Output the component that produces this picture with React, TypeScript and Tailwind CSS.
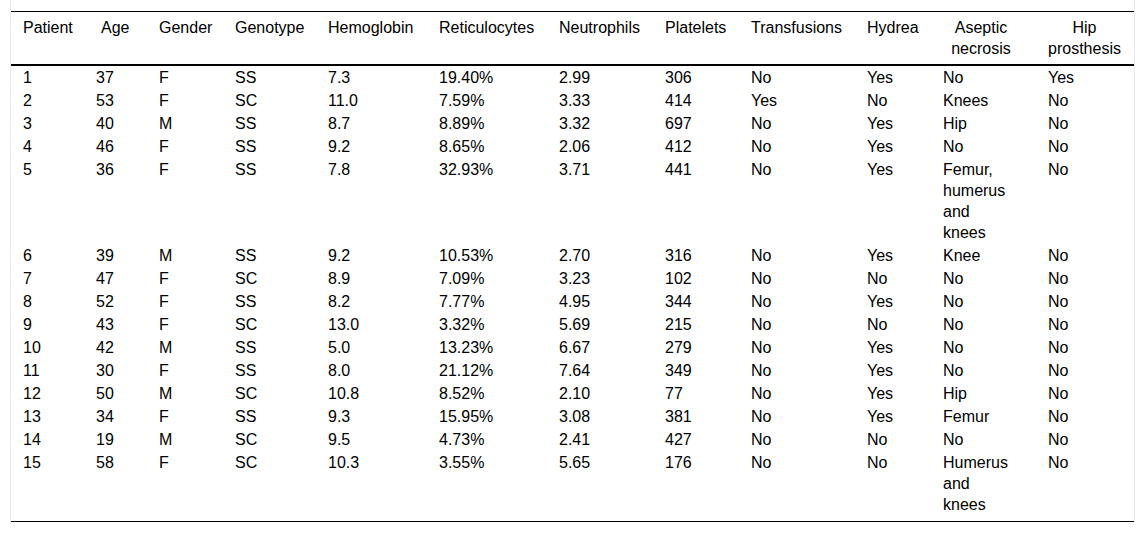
import React from 'react';

type Row = string[];

const rows: Row[] = [
  ['1', '37', 'F', 'SS', '7.3', '19.40%', '2.99', '306', 'No', 'Yes', 'No', 'Yes'],
  ['2', '53', 'F', 'SC', '11.0', '7.59%', '3.33', '414', 'Yes', 'No', 'Knees', 'No'],
  ['3', '40', 'M', 'SS', '8.7', '8.89%', '3.32', '697', 'No', 'Yes', 'Hip', 'No'],
  ['4', '46', 'F', 'SS', '9.2', '8.65%', '2.06', '412', 'No', 'Yes', 'No', 'No'],
  ['5', '36', 'F', 'SS', '7.8', '32.93%', '3.71', '441', 'No', 'Yes', 'Femur, humerus and knees', 'No'],
  ['6', '39', 'M', 'SS', '9.2', '10.53%', '2.70', '316', 'No', 'Yes', 'Knee', 'No'],
  ['7', '47', 'F', 'SC', '8.9', '7.09%', '3.23', '102', 'No', 'No', 'No', 'No'],
  ['8', '52', 'F', 'SS', '8.2', '7.77%', '4.95', '344', 'No', 'Yes', 'No', 'No'],
  ['9', '43', 'F', 'SC', '13.0', '3.32%', '5.69', '215', 'No', 'No', 'No', 'No'],
  ['10', '42', 'M', 'SS', '5.0', '13.23%', '6.67', '279', 'No', 'Yes', 'No', 'No'],
  ['11', '30', 'F', 'SS', '8.0', '21.12%', '7.64', '349', 'No', 'Yes', 'No', 'No'],
  ['12', '50', 'M', 'SC', '10.8', '8.52%', '2.10', '77', 'No', 'Yes', 'Hip', 'No'],
  ['13', '34', 'F', 'SS', '9.3', '15.95%', '3.08', '381', 'No', 'Yes', 'Femur', 'No'],
  ['14', '19', 'M', 'SC', '9.5', '4.73%', '2.41', '427', 'No', 'No', 'No', 'No'],
  ['15', '58', 'F', 'SC', '10.3', '3.55%', '5.65', '176', 'No', 'No', 'Humerus and knees', 'No'],
];

// column widths measured from the picture
const widths = [85, 63, 76, 93, 111, 120, 106, 86, 116, 76, 105, 86];

export default function App() {
  return (
    <div className="bg-white min-h-[533px] text-black text-[16px] leading-[21px]" style={{ fontFamily: '"Liberation Sans", Arial, sans-serif' }}>
      <div className="ml-[10px] w-[1125px] border-x border-[#ebebeb] pt-[11px]">
        <table className="table-fixed border-collapse w-[1123px]">
          <colgroup>
            {widths.map((w, i) => <col key={i} style={{ width: w }} />)}
          </colgroup>
          <thead>
            <tr className="border-t border-black border-b-2 align-top">
              <th className="font-normal text-left pl-3 py-[5px]">Patient</th>
              <th className="font-normal text-left pl-[5px] py-[5px]">Age</th>
              <th className="font-normal text-left py-[5px]">Gender</th>
              <th className="font-normal text-left py-[5px]">Genotype</th>
              <th className="font-normal text-left py-[5px]">Hemoglobin</th>
              <th className="font-normal text-left py-[5px]">Reticulocytes</th>
              <th className="font-normal text-left py-[5px]">Neutrophils</th>
              <th className="font-normal text-left py-[5px]">Platelets</th>
              <th className="font-normal text-left py-[5px]">Transfusions</th>
              <th className="font-normal text-left py-[5px]">Hydrea</th>
              <th className="font-normal text-center pr-[29px] py-[5px]">Aseptic necrosis</th>
              <th className="font-normal text-center pr-[13px] py-[5px]">Hip prosthesis</th>
            </tr>
          </thead>
          <tbody className="border-b border-black">
            {rows.map((r, i) => (
              <tr key={i} className="align-top">
                {r.map((c, j) => (
                  <td
                    key={j}
                    className={
                      'py-px text-left ' +
                      (j === 0 ? 'pl-3 ' : '') +
                      (j === 10 ? 'pr-[35px] ' : '') +
                      (j === 11 ? 'pr-[13px] ' : '') +
                      (i === rows.length - 1 ? 'pb-[6px]' : '')
                    }
                  >
                    {c}
                  </td>
                ))}
              </tr>
            ))}
          </tbody>
        </table>
      </div>
    </div>
  );
}
